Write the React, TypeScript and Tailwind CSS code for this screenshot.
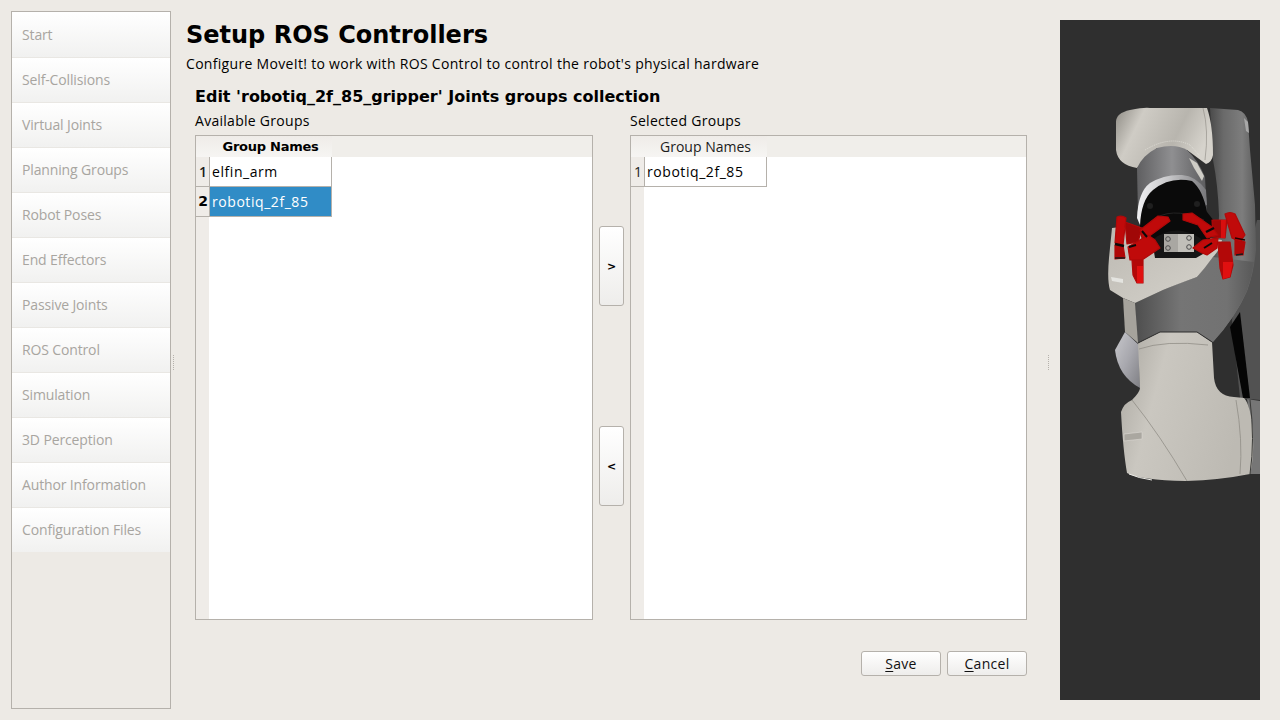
const NAV = ["Start","Self-Collisions","Virtual Joints","Planning Groups","Robot Poses","End Effectors","Passive Joints","ROS Control","Simulation","3D Perception","Author Information","Configuration Files"];

function Nav() {
  return (
    <div className="mt-[11px] ml-[11px] w-[160px] h-[698px] border border-[#b5b1ab] flex flex-col shrink-0">
      {NAV.map((n) => (
        <div key={n} className="h-[45px] shrink-0 pl-[10px] pb-[1px] flex items-center text-[14px] tracking-[-0.01em] text-[#a8a5a0] bg-gradient-to-b from-white to-[#f1f1f0] border-t border-[#e9e7e3] first:border-t-white font-['Open_Sans','Noto_Sans',sans-serif]">{n}</div>
      ))}
    </div>
  );
}

function Dots() {
  return (
    <div className="flex flex-col gap-[1px]">
      {[0,1,2,3,4,5,6,7].map((i) => <div key={i} className="w-[1px] h-[1px] bg-[#b5b1ab]" />)}
    </div>
  );
}

function GroupTable({ rows, selected, headerBold }: { rows: string[]; selected?: number; headerBold: boolean }) {
  return (
    <div className="w-full h-[485px] border border-[#b5b1ab] bg-white flex flex-col">
      <div className="h-[21px] flex shrink-0 bg-[#f0eeea]">
        <div className={headerBold ? "w-[136px] pl-[13px] text-center text-[13px] tracking-[-0.02em] leading-[21px] font-bold text-black font-['DejaVu_Sans',sans-serif] bg-gradient-to-b from-[#efece8] to-[#f6f5f3]" : "w-[136px] pl-[13px] text-center text-[14px] leading-[21px] text-[#1c1c1c] font-['Open_Sans',sans-serif] bg-gradient-to-b from-[#efece8] to-[#f6f5f3]"}>Group Names</div>
      </div>
      <div className="flex-1 flex min-h-0">
        <div className="w-[13px] bg-[#efece8] flex flex-col shrink-0">
          {rows.map((r, i) => (
            <div key={r} className={(i === selected ? "font-bold text-black font-['DejaVu_Sans',sans-serif] " : (headerBold ? "font-semibold " : "") + "text-[#1c1c1c] font-['Open_Sans',sans-serif] ") + "h-[30px] border-b border-[#b5b1ab] text-[14px] flex items-center justify-center pl-[1px]"}>{i + 1}</div>
          ))}
        </div>
        <div className="w-[123px] flex flex-col">
          {rows.map((r, i) => (
            <div key={r} className={(i === selected ? "bg-[#308cc6] text-white" : "bg-white text-black") + " h-[30px] border-b border-r border-l border-[#b5b1ab] pl-[2px] flex items-center text-[14px] tracking-[0.04em] font-['Open_Sans',sans-serif]"}>{r}</div>
          ))}
        </div>
      </div>
    </div>
  );
}

function ArrowBtn({ label }: { label: string }) {
  return <div className="w-[25px] h-[80px] pt-[3px] border border-[#b5b1ab] rounded-[3px] bg-gradient-to-b from-white to-[#eeedeb] flex items-center justify-center text-[11px] font-bold text-black font-['DejaVu_Sans',sans-serif]">{label}</div>;
}

function ActionBtn({ first, rest }: { first: string; rest: string }) {
  return (
    <div className="w-[80px] h-[25px] border border-[#b5b1ab] rounded-[3px] bg-gradient-to-b from-white to-[#eeedeb] flex items-center justify-center text-[14px] tracking-[0.02em] text-[#111] font-['Open_Sans',sans-serif]">
      <span className="underline underline-offset-2">{first}</span>{rest}
    </div>
  );
}

function Robot() {
  return (
    <svg className="w-full h-full block" viewBox="1060 20 200 680" xmlns="http://www.w3.org/2000/svg">
      <defs>
        <linearGradient id="upper" x1="0" y1="0" x2="1" y2="0.3">
          <stop offset="0" stopColor="#8f8c85" /><stop offset="0.28" stopColor="#cfccc5" /><stop offset="0.7" stopColor="#b8b5ae" /><stop offset="1" stopColor="#d6d3cc" />
        </linearGradient>
        <linearGradient id="dark" x1="1205" y1="0" x2="1258" y2="0" gradientUnits="userSpaceOnUse">
          <stop offset="0" stopColor="#3f3f3f" /><stop offset="0.35" stopColor="#6a6a6a" /><stop offset="0.7" stopColor="#7d7d7d" /><stop offset="1" stopColor="#585858" />
        </linearGradient>
        <linearGradient id="cyl" x1="0" y1="0" x2="1" y2="0">
          <stop offset="0" stopColor="#5f5f61" /><stop offset="0.5" stopColor="#8f8f91" /><stop offset="1" stopColor="#5c5c5e" />
        </linearGradient>
        <linearGradient id="band" x1="1135" y1="0" x2="1250" y2="0" gradientUnits="userSpaceOnUse">
          <stop offset="0" stopColor="#4e4e4e" /><stop offset="0.4" stopColor="#757575" /><stop offset="0.8" stopColor="#727272" /><stop offset="1" stopColor="#5c5c5c" />
        </linearGradient>
        <linearGradient id="lower" x1="0" y1="0" x2="1" y2="0.3">
          <stop offset="0" stopColor="#a9a69f" /><stop offset="0.35" stopColor="#cac7c0" /><stop offset="1" stopColor="#bdbab3" />
        </linearGradient>
        <linearGradient id="silver" x1="0" y1="0" x2="1" y2="1">
          <stop offset="0" stopColor="#c8c8cc" /><stop offset="0.5" stopColor="#a8a8ae" /><stop offset="1" stopColor="#7f7f84" />
        </linearGradient>
        <linearGradient id="body" x1="0" y1="0" x2="1" y2="1">
          <stop offset="0" stopColor="#bcb9b2" /><stop offset="1" stopColor="#d6d3cc" />
        </linearGradient>
        <linearGradient id="ring" x1="0" y1="0" x2="1" y2="0">
          <stop offset="0" stopColor="#f0f0f2" /><stop offset="0.45" stopColor="#c8c8ca" /><stop offset="1" stopColor="#77777a" />
        </linearGradient>
      </defs>

      {/* rear grey column, black wedge */}
      <path d="M1257 220 L1260 220 L1260 400 L1240 398 L1232 320 Z" fill="#525252" />
      <path d="M1230 327 L1240 312 L1250 398 L1243 398 Z" fill="#050505" />
      <path d="M1247 399 L1260 401 L1260 474 L1250 474 Q1255 440 1247 399 Z" fill="#767676" />

      {/* big dark link */}
      <path d="M1210 108 L1238 110 Q1246 112 1248 122 L1250 150 L1255 205 L1256 250 Q1254 272 1247 291 Q1235 318 1213 342 L1197 332 L1160 332 L1137 343 L1135 303 L1163 290 L1180 283 L1197 277 L1213 257 Q1219 235 1219 215 Q1218 185 1213 160 Z" fill="url(#dark)" />
      <path d="M1135 303 L1163 290 L1180 283 L1197 277 L1213 257 L1254 262 Q1252 277 1247 291 Q1235 318 1213 342 L1197 332 L1160 332 L1137 343 Z" fill="url(#band)" />
      <path d="M1244 118 L1248 122 L1249 133 L1246 131 Z" fill="#a8a8a8" />

      {/* light body behind gripper */}
      <path d="M1112 228 L1130 226 L1222 240 Q1220 250 1213 257 Q1205 268 1197 277 Q1175 285 1163 290 L1135 303 L1123 298 L1110 290 Q1107 280 1109 258 Z" fill="url(#body)" />
      <path d="M1111 277 L1123 279 L1123 283 L1112 281 Z" fill="#e4e4e0" />
      <path d="M1123 298 L1135 303 L1138 343 L1125 332 Z" fill="#a6a39c" />

      {/* silver side piece */}
      <path d="M1115 350 L1125 332 L1139 345 L1140 388 Q1118 376 1115 350 Z" fill="url(#silver)" />

      {/* lower link */}
      <path d="M1138 343 L1160 332 L1197 332 L1212 342 L1214 378 Q1216 396 1234 397 L1244 398 Q1251 405 1253 435 Q1254 460 1250 474 Q1220 480 1186 481 Q1140 480 1127 473 Q1123 450 1121 412 Q1124 403 1132 400 Q1140 392 1140 388 Z" fill="url(#lower)" />
      <path d="M1132 400 Q1160 435 1187 481 M1139 349 Q1165 340 1208 345 M1236 400 Q1243 440 1240 474" stroke="#8a8780" strokeWidth="0.7" fill="none" />
      <path d="M1250 400 Q1255 440 1250 474" stroke="#3a3a38" strokeWidth="1" fill="none" />
      <path d="M1138 343 L1160 332 L1197 332 L1212 342" stroke="#2d2d2d" strokeWidth="1" fill="none" />
      <path d="M1124 434 L1142 432 L1142 439 L1124 441 Z" fill="#aaa7a0" stroke="#dbd9d3" strokeWidth="0.6" />
      <path d="M1129 474 Q1138 478 1152 480" stroke="#ecebe6" strokeWidth="1" fill="none" />

      {/* upper light link */}
      <path d="M1116 122 Q1116 113 1130 110 Q1145 107 1150 108 L1207 108 Q1213 125 1213 155 Q1212 162 1206 164 L1187 150 L1157 148 L1137 168 Q1118 165 1116 150 Z" fill="url(#upper)" />
      <path d="M1145 150 Q1170 135 1190 145 L1200 156" stroke="#e8e6e0" strokeWidth="0.7" fill="none" strokeDasharray="1 1" />
      <path d="M1203 108 Q1209 130 1205 160" stroke="#8b8882" strokeWidth="0.6" fill="none" />

      {/* cylinder */}
      <path d="M1137 168 Q1143 155 1157 148 Q1175 143 1187 150 Q1198 160 1205 177 L1207 215 L1138 215 Z" fill="url(#cyl)" />
      <path d="M1189 158 L1197 163 L1204 176 L1202 181 L1194 168 Z" fill="#cfcdc6" />

      {/* white ring and black flange */}
      <path d="M1137 218 Q1138 192 1150 183 Q1165 174 1182 175 Q1196 176 1206 190 L1207 205 L1140 225 Z" fill="url(#ring)" />
      <path d="M1140 226 Q1141 200 1153 190 Q1170 176 1192 181 Q1203 190 1207 212 L1218 226 L1202 252 L1160 252 L1141 236 Z" fill="#0a0a0a" />
      <circle cx="1150" cy="206" r="3" fill="#1f1f1f" />
      <circle cx="1197" cy="204" r="3" fill="#1f1f1f" />
      <path d="M1150 222 Q1170 205 1204 220" stroke="#232323" strokeWidth="1" fill="none" />
      <path d="M1152 240 Q1175 222 1200 238 L1210 250 L1196 258 L1155 258 Z" fill="#161616" />

      {/* plate */}
      <rect x="1164" y="234" width="30" height="18" fill="#a9a7a2" />
      <rect x="1178" y="234" width="16" height="18" fill="#c1bfb9" />
      <circle cx="1168" cy="239" r="2.3" fill="none" stroke="#4c4c4c" />
      <circle cx="1189" cy="238" r="2.3" fill="none" stroke="#4c4c4c" />
      <circle cx="1168" cy="248" r="2.3" fill="none" stroke="#4c4c4c" />
      <circle cx="1189" cy="247" r="2.3" fill="none" stroke="#4c4c4c" />

      {/* left gripper */}
      <g fill="#c00a0a" stroke="#b00909" strokeWidth="1.2" strokeLinejoin="round">
        <path d="M1125 222 L1142 228 L1138 242 L1127 244 Z" fill="#a00707" />
        <path d="M1115 245 L1123 245 L1125 258 L1115 259 Z" fill="#b00808" />
        <path d="M1117 217 Q1122 215 1126 218 L1123 245 L1115 243 Z" />
        <path d="M1158 216 L1168 217 L1170 221 L1148 237 L1142 238 L1140 230 Z" />
        <path d="M1128 247 L1148 235 L1155 240 L1160 248 L1142 260 L1130 260 Z" />
        <path d="M1132 260 L1143 260 L1143 283 L1137 283 L1133 275 Z" fill="#b30808" />
        <path d="M1137 266 L1143 266 L1143 283 L1137 283 Z" fill="#e01010" stroke="none" />
      </g>
      <path d="M1115 244 L1124 246" stroke="#0a0a0a" strokeWidth="2.5" />
      <path d="M1142 231 L1147 237" stroke="#0a0a0a" strokeWidth="2" />
      <path d="M1115 258 L1125 258" stroke="#1a1a1a" strokeWidth="1.5" />
      <path d="M1129 247 L1136 245" stroke="#0a0a0a" strokeWidth="2" />

      {/* right gripper */}
      <g fill="#c00a0a" stroke="#b00909" strokeWidth="1.2" strokeLinejoin="round">
        <path d="M1212 220 L1227 220 L1225 238 L1213 237 Z" fill="#a00707" />
        <path d="M1235 238 L1245 242 L1243 255 L1235 255 Z" fill="#b00808" />
        <path d="M1225 214 Q1230 211 1235 214 L1245 235 L1240 242 L1232 238 Z" />
        <path d="M1183 214 L1192 213 L1212 227 L1218 235 L1207 238 L1198 225 L1183 220 Z" />
        <path d="M1193 248 L1203 240 L1218 238 L1217 248 L1207 255 L1202 253 Z" />
        <path d="M1218 242 L1230 242 L1233 265 L1230 277 L1223 279 L1220 268 Z" fill="#b30808" />
        <path d="M1223 262 L1233 262 L1230 277 L1223 279 Z" fill="#e01010" stroke="none" />
        <path d="M1221 220 L1226 220 L1225 238 L1221 238 Z" fill="#d80e0e" stroke="none" />
      </g>
      <path d="M1235 238 L1245 240" stroke="#200" strokeWidth="1.5" />
      <path d="M1206 232 L1214 228" stroke="#0a0a0a" strokeWidth="2.5" />
      <path d="M1236 255 L1243 254" stroke="#1a1a1a" strokeWidth="1.5" />
      <path d="M1204 248 L1212 243" stroke="#0a0a0a" strokeWidth="2" />
    </svg>
  );
}

export default function App() {
  return (
    <div className="w-[1280px] h-[720px] overflow-hidden bg-[#edeae5] flex relative font-['Open_Sans',sans-serif]">
      <Nav />
      <div className="w-[15px] shrink-0 flex items-center pl-[2px] pt-[4px]"><Dots /></div>
      <div className="w-[859px] shrink-0 flex flex-col">
        <h1 className="mt-[21px] h-[28px] text-[24px] leading-[28px] font-bold text-black font-['DejaVu_Sans',sans-serif] whitespace-nowrap">Setup ROS Controllers</h1>
        <p className="mt-[5px] h-[19px] text-[14px] leading-[19px] tracking-[0.022em] text-black whitespace-nowrap">Configure MoveIt! to work with ROS Control to control the robot's physical hardware</p>
        <div className="pl-[9px] flex flex-col">
          <h2 className="mt-[14px] h-[20px] text-[16px] leading-[20px] font-bold text-black font-['DejaVu_Sans',sans-serif] whitespace-nowrap">Edit 'robotiq_2f_85_gripper' Joints groups collection</h2>
          <div className="mt-[4px] flex">
            <div className="w-[398px] flex flex-col shrink-0">
              <div className="h-[19px] mb-[5px] text-[14px] leading-[19px] tracking-[0.02em] text-black">Available Groups</div>
              <GroupTable rows={["elfin_arm", "robotiq_2f_85"]} selected={1} headerBold />
            </div>
            <div className="w-[37px] shrink-0 flex flex-col pl-[6px] pt-[115px] gap-[120px]">
              <ArrowBtn label=">" />
              <ArrowBtn label="<" />
            </div>
            <div className="w-[397px] flex flex-col shrink-0">
              <div className="h-[19px] mb-[5px] text-[14px] leading-[19px] tracking-[0.02em] text-black">Selected Groups</div>
              <GroupTable rows={["robotiq_2f_85"]} headerBold={false} />
            </div>
          </div>
          <div className="mt-[31px] w-[832px] flex justify-end gap-[6px]">
            <ActionBtn first="S" rest="ave" />
            <ActionBtn first="C" rest="ancel" />
          </div>
        </div>
      </div>
      <div className="w-[15px] shrink-0 flex items-center pl-[3px] pt-[4px]"><Dots /></div>
      <div className="mt-[20px] w-[200px] h-[680px] bg-[#2f2f2f] shrink-0"><Robot /></div>
    </div>
  );
}
